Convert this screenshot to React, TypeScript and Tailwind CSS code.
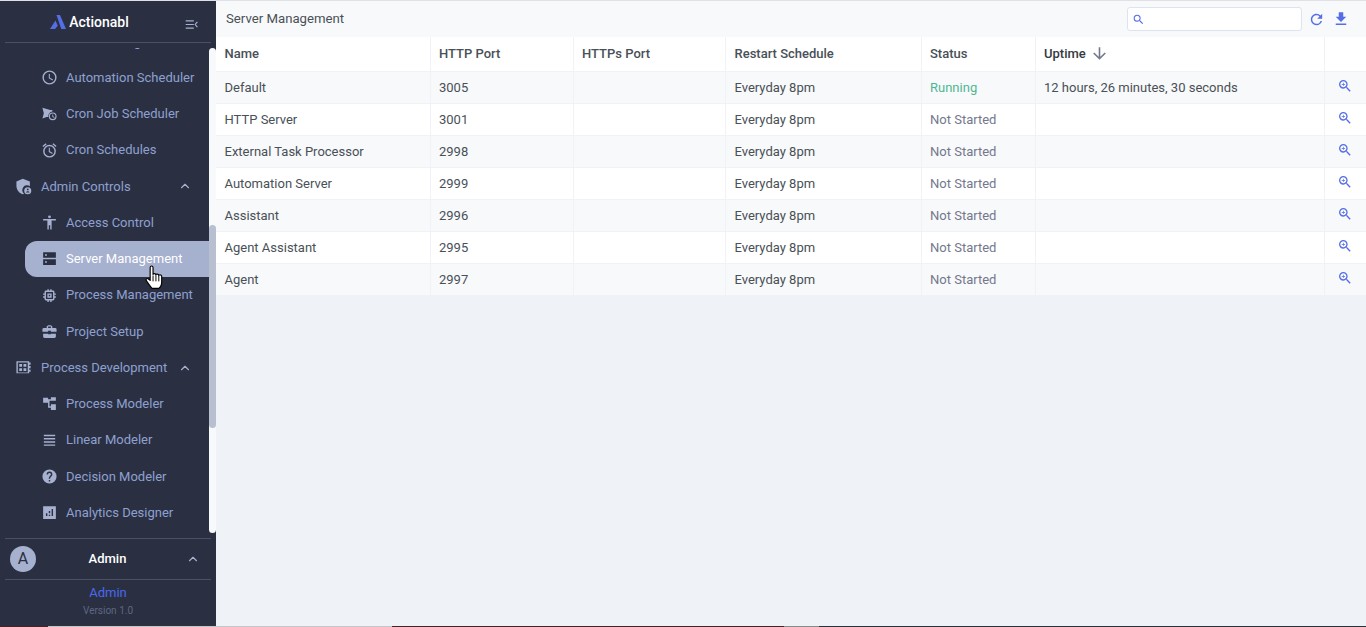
import { ChevronUp } from "lucide-react";

const rows = [
  { name: "Default", port: "3005", status: "Running", uptime: "12 hours, 26 minutes, 30 seconds" },
  { name: "HTTP Server", port: "3001", status: "Not Started", uptime: "" },
  { name: "External Task Processor", port: "2998", status: "Not Started", uptime: "" },
  { name: "Automation Server", port: "2999", status: "Not Started", uptime: "" },
  { name: "Assistant", port: "2996", status: "Not Started", uptime: "" },
  { name: "Agent Assistant", port: "2995", status: "Not Started", uptime: "" },
  { name: "Agent", port: "2997", status: "Not Started", uptime: "" },
];

const I = ({ d }: { d: string }) => (
  <svg viewBox="0 0 24 24" width="17" height="17" fill="#a6b0cf">
    <path d={d} fillRule="evenodd" />
  </svg>
);

const Mat = ({ d, size, color = "#556ee6" }: { d: string; size: number; color?: string }) => (
  <svg viewBox="0 0 24 24" width={size} height={size} fill={color} className="shrink-0">
    <path d={d} />
  </svg>
);

const matIcons = {
  search:
    "M15.500 14h-.79l-.28-.27A6.470 6.470 0 0 0 16 9.500 6.500 6.500 0 1 0 9.500 16c1.610 0 3.090-.59 4.230-1.570l.27.28v.79l5 4.990L20.490 19l-4.990-5zm-6 0C7.010 14 5 11.990 5 9.500S7.010 5 9.500 5 14 7.010 14 9.500 11.990 14 9.500 14z",
  zoomIn:
    "M15.500 14h-.79l-.28-.27A6.470 6.470 0 0 0 16 9.500 6.500 6.500 0 1 0 9.500 16c1.610 0 3.090-.59 4.230-1.570l.27.28v.79l5 4.990L20.490 19l-4.990-5zm-6 0C7.010 14 5 11.990 5 9.500S7.010 5 9.500 5 14 7.010 14 9.500 11.990 14 9.500 14zM12 10h-2v2H9v-2H7V9h2V7h1v2h2v1z",
  refresh:
    "M17.650 6.350A7.958 7.958 0 0 0 12 4c-4.420 0-7.990 3.580-7.990 8s3.570 8 7.990 8c3.730 0 6.840-2.550 7.730-6h-2.080A5.990 5.990 0 0 1 12 18c-3.310 0-6-2.690-6-6s2.690-6 6-6c1.660 0 3.140.69 4.220 1.780L13 11h7V4l-2.350 2.350z",
  download: "M19 9h-4V3H9v6H5l7 7 7-7zM5 18v2h14v-2H5z",
  arrowDown: "M20 12l-1.410-1.410L13 16.170V4h-2v12.170l-5.580-5.590L4 12l8 8 8-8z",
};

const icons = {
  clock:
    "M12 2a10 10 0 1 0 0 20 10 10 0 0 0 0-20zm0 2a8 8 0 1 1 0 16 8 8 0 0 1 0-16zm-1 3h1.500v5.200l4.500 2.700-.8 1.200L11 13z",
  cron: "M2 4l11 3h3v2.300A6.500 6.500 0 0 0 10.300 17H8l-6 2 2-7.500zM16.500 10.500a5.500 5.500 0 1 1 0 11 5.500 5.500 0 0 1 0-11zm0 1.600a3.900 3.900 0 1 0 0 7.800 3.900 3.900 0 0 0 0-7.800zM16 13.500h1.200v2.500l2 1.200-.6 1-2.600-1.600z",
  alarm:
    "M22 5.700l-4.600-3.900-1.300 1.500 4.600 3.900zM7.900 3.400L6.600 1.900 2 5.700l1.300 1.500zM12 4a9 9 0 1 0 0 18 9 9 0 0 0 0-18zm0 2a7 7 0 1 1 0 14 7 7 0 0 1 0-14zm-1 2h1.500v5.200l4 2.400-.8 1.200-4.700-2.800z",
  shield:
    "M11 1L2 5v6c0 5.500 3.800 10.700 9 12 .7-.2 1.300-.4 1.900-.7A6.500 6.500 0 0 1 21 11.600V5zM18 13a5 5 0 1 0 0 10 5 5 0 0 0 0-10zm0 1.800a1.300 1.300 0 1 1 0 2.600 1.300 1.300 0 0 1 0-2.600zM15.500 20.500c.4-1.200 1.400-1.800 2.500-1.800s2.100.6 2.500 1.800z",
  person: "M12 2a2 2 0 1 1 0 4 2 2 0 0 1 0-4zm9 7h-6v13h-2v-6h-2v6H9V9H3V7h18z",
  server: "M3 3h18v8H3zm3 2.500v3h2v-3zM3 13h18v8H3zm3 2.500v3h2v-3z",
  chip: "M15 9H9v6h6zm-2 4h-2v-2h2zm8-2V9h-2V7a2 2 0 0 0-2-2h-2V3h-2v2h-2V3H9v2H7a2 2 0 0 0-2 2v2H3v2h2v2H3v2h2v2c0 1.100.9 2 2 2h2v2h2v-2h2v2h2v-2h2a2 2 0 0 0 2-2v-2h2v-2h-2v-2zm-4 6H7V7h10z",
  case: "M10 16v-1H3v4c0 1.100.9 2 2 2h14a2 2 0 0 0 2-2v-4h-7v1zm10-9h-4V5l-2-2h-4L8 5v2H4a2 2 0 0 0-2 2v3.500h8V11h4v1.500h8V9a2 2 0 0 0-2-2zm-6 0h-4V5h4z",
  board:
    "M2 3h18v2h2v3h-2v2h2v3h-2v2h2v3h-2v2H2zm2 2v14h14V5zm2 2h4v4H6zm6 0h4v4h-4zm-6 6h4v4H6zm6 0h4v4h-4z",
  tree: "M3 4h7v7H3zm11-1h7v5h-7zm0 10h7v8h-7zM10 6h2v0zm0 0h4v2h-2v8h2v2h-4V8h0z",
  lines: "M4 4h16v2H4zm0 4.500h16v2H4zm0 4.500h16v2H4zm0 4.500h16v2H4z",
  help: "M12 2a10 10 0 1 0 0 20 10 10 0 0 0 0-20zm1 17h-2v-2h2zm2.100-7.700l-.9.900c-.7.700-1.200 1.300-1.200 2.800h-2v-.5c0-1.100.5-2.100 1.200-2.800l1.200-1.300c.4-.3.600-.8.600-1.400a2 2 0 0 0-4 0H8a4 4 0 0 1 8 0c0 .9-.4 1.700-.9 2.300z",
  chart: "M3 3h18v18H3zm4 10v4h2v-4zm4 2v2h2v-2zm4-8v10h2V7zm-4 3v3h2v-3z",
};

type Item = { label: string; icon: string; group?: boolean; active?: boolean };

const menu: Item[] = [
  { label: "Event Manager", icon: "" },
  { label: "Automation Scheduler", icon: icons.clock },
  { label: "Cron Job Scheduler", icon: icons.cron },
  { label: "Cron Schedules", icon: icons.alarm },
  { label: "Admin Controls", icon: icons.shield, group: true },
  { label: "Access Control", icon: icons.person },
  { label: "Server Management", icon: icons.server, active: true },
  { label: "Process Management", icon: icons.chip },
  { label: "Project Setup", icon: icons.case },
  { label: "Process Development", icon: icons.board, group: true },
  { label: "Process Modeler", icon: icons.tree },
  { label: "Linear Modeler", icon: icons.lines },
  { label: "Decision Modeler", icon: icons.help },
  { label: "Analytics Designer", icon: icons.chart },
];

function MenuRow({ item }: { item: Item }) {
  if (item.group) {
    return (
      <div className="h-[36.25px] flex items-center pl-[15px] pr-[24px] text-[#8fa0d0]">
        <span className="w-[26px] shrink-0"><I d={item.icon} /></span>
        <span className="flex-1">{item.label}</span>
        <ChevronUp size={14} color="#a6b0cf" />
      </div>
    );
  }
  return (
    <div className="h-[36.25px] pl-[25px] flex items-center">
      <div
        className={
          item.active
            ? "h-[36px] w-full flex items-center pl-[16px] rounded-l-[12px] bg-[#a6b0cf] text-white"
            : "h-[36px] w-full flex items-center pl-[16px] text-[#8fa0d0]"
        }
      >
        <span className="w-[25px] shrink-0">
          {item.active ? (
            <svg viewBox="0 0 24 24" width="17" height="17" fill="#2a3042">
              <path d={item.icon} fillRule="evenodd" />
            </svg>
          ) : (
            <I d={item.icon} />
          )}
        </span>
        <span className="whitespace-nowrap">{item.label}</span>
      </div>
    </div>
  );
}

function Sidebar() {
  return (
    <aside className="relative w-[216px] shrink-0 bg-[#2a3042] flex flex-col">
      <div className="h-[42px] mx-[5px] shrink-0 border-b border-[#4b5163] relative flex items-center justify-center pr-[37px] pt-[1px]">
        <svg viewBox="0 0 16 14" width="16" height="14" className="mr-[3px]">
          <path d="M6.500 0h3.500L16 14h-4.700z" fill="#556ee6" />
          <path d="M5.500 5.500l2.300 5.300L5 14H0z" fill="#556ee6" />
        </svg>
        <span className="text-white text-[14px] font-medium">Actionabl</span>
        <svg viewBox="0 0 14 10" width="14" height="9" className="absolute right-[12px] top-[19px]" fill="none" stroke="#a6b0cf" strokeWidth="1.300">
          <path d="M0 1h9M0 5h9M0 9h9M13 2L10.500 5 13 8" />
        </svg>
      </div>
      <div className="relative flex-1 overflow-hidden mt-[5px]">
        <div className="-mt-[24.750px] text-[13px]">
          {menu.map((item) => (
            <MenuRow key={item.label} item={item} />
          ))}
        </div>
        <div className="absolute right-0 top-0 w-[7px] h-[485px] rounded-[4px] bg-[#f8f9fb] overflow-hidden">
          <div className="mt-[177px] h-[203px] bg-[#b8bfd0] rounded-[4px]" />
        </div>
      </div>
      <div className="mx-[5px] shrink-0 h-[42px] border-y border-[#4b5163] flex items-center pl-[5px] pr-[11px]">
        <div className="w-[26px] h-[26px] rounded-full bg-[#a6b0cf] text-[#2a3042] text-[16px] flex items-center justify-center">A</div>
        <span className="flex-1 text-center text-white text-[13px] font-medium pr-[7px]">Admin</span>
        <ChevronUp size={14} color="#a6b0cf" />
      </div>
      <div className="h-[46px] shrink-0 flex flex-col items-center pt-[4px]">
        <span className="text-[#4a68f0] text-[13px] leading-[18px]">Admin</span>
        <span className="text-[#5f6780] text-[10px] leading-[18px]">Version 1.0</span>
      </div>
      <svg viewBox="0 0 20 26" width="20" height="25" className="absolute left-[144px] top-[264px]">
        <path
          d="M6 2.500c0-2 3-2 3 0V10c0-1.500 3-1.500 3 .5 0-1.500 3-1.500 3 .5 0-1.200 3-1.200 3 .8v6c0 3-1.500 5.500-3 6.500H8c-1.500-1.500-4-5-6-8-1-1.500.8-3 2.200-1.800L6 16z"
          fill="#fff"
          stroke="#000"
          strokeWidth="1.200"
          strokeLinejoin="round"
        />
        <path d="M9 11v6M12 11v6M15 11v6" stroke="#000" strokeWidth="1" />
      </svg>
    </aside>
  );
}

const cell = "px-[8.500px] border-r border-b border-[#eff2f7]";

function Main() {
  return (
    <main className="flex-1 min-w-0 bg-[#eff2f7] text-[13px] text-[#495057]">
      <div className="h-[36px] bg-[#f8f9fb] flex items-center pl-[10px] pr-[16px]">
        <span className="flex-1 text-[13.200px] text-[#495057]">Server Management</span>
        <div className="w-[175px] h-[24px] bg-white border border-[#dfe3f0] rounded-[3px] flex items-center pl-[4px] mr-[6px]">
          <Mat d={matIcons.search} size={13} />
        </div>
        <span className="mr-[7px]"><Mat d={matIcons.refresh} size={17} /></span>
        <Mat d={matIcons.download} size={18} />
      </div>
      <table className="w-full table-fixed border-collapse">
        <colgroup>
          <col className="w-[214px]" />
          <col className="w-[143px]" />
          <col className="w-[152px]" />
          <col className="w-[196px]" />
          <col className="w-[114px]" />
          <col className="w-[289px]" />
          <col />
        </colgroup>
        <thead>
          <tr className="h-[34px] bg-white text-left">
            <th className={`font-medium pb-[1px] ${cell}`}>Name</th>
            <th className={`font-medium pb-[1px] ${cell}`}>HTTP Port</th>
            <th className={`font-medium pb-[1px] ${cell}`}>HTTPs Port</th>
            <th className={`font-medium pb-[1px] pl-[9px] ${cell}`}>Restart Schedule</th>
            <th className={`font-medium pb-[1px] ${cell}`}>Status</th>
            <th className={`font-medium pb-[1px] text-[#343a40] ${cell}`}>
              <span className="inline-flex items-center gap-[4px]">
                Uptime <Mat d={matIcons.arrowDown} size={19} color="#74788d" />
              </span>
            </th>
            <th className="border-b border-[#eff2f7]" />
          </tr>
        </thead>
        <tbody>
          {rows.map((r, i) => (
            <tr key={r.name} className={i % 2 === 0 ? "h-[32px] bg-[#f8f9fa]" : "h-[32px] bg-white"}>
              <td className={`pt-[2px] ${cell}`}>{r.name}</td>
              <td className={`pt-[2px] ${cell}`}>{r.port}</td>
              <td className={cell} />
              <td className={`pt-[2px] pl-[9px] ${cell}`}>Everyday 8pm</td>
              <td className={r.status === "Running" ? `pt-[2px] ${cell} text-[#50b795]` : `pt-[2px] ${cell} text-[#74788d]`}>
                {r.status}
              </td>
              <td className={`pt-[2px] ${cell}`}>{r.uptime}</td>
              <td className="border-b border-[#eff2f7] pb-[2px] pl-[12px]">
                <Mat d={matIcons.zoomIn} size={16} />
              </td>
            </tr>
          ))}
        </tbody>
      </table>
    </main>
  );
}

export default function App() {
  return (
    <div className="h-[627px] overflow-hidden flex flex-col font-['Roboto',sans-serif]">
      <div className="h-px shrink-0 bg-[#dfe1e6]" />
      <div className="flex-1 min-h-0 flex">
        <Sidebar />
        <Main />
      </div>
      <div className="h-px shrink-0 flex">
        <div className="w-[48px] bg-[#4a2025]" />
        <div className="w-[344px] bg-[#c4c6c8]" />
        <div className="w-[392px] bg-[#4a2025]" />
        <div className="w-[35px] bg-[#8a8a8a]" />
        <div className="flex-1 bg-[#2b3136]" />
      </div>
    </div>
  );
}
